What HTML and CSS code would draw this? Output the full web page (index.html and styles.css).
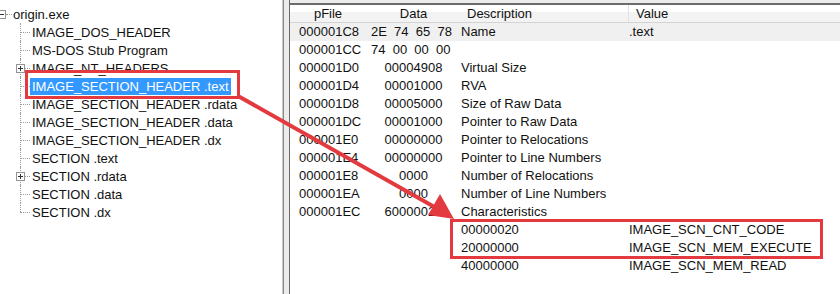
FILE: index.html
```html
<!DOCTYPE html>
<html lang="en">
<head>
    <meta charset="UTF-8">
    <title>PE Section Header</title>
    <link rel="stylesheet" href="styles.css">
</head>
<body>
    <div class="window">
        <div class="tree-pane">
            <div class="root">
                <span class="box minus"></span>
                <span class="label">origin.exe</span>
            </div>
            <ul class="children">
                <li><span class="label">IMAGE_DOS_HEADER</span></li>
                <li><span class="label">MS-DOS Stub Program</span></li>
                <li class="has-kids"><span class="box plus"></span><span class="label">IMAGE_NT_HEADERS</span></li>
                <li><span class="label selected">IMAGE_SECTION_HEADER .text</span></li>
                <li><span class="label">IMAGE_SECTION_HEADER .rdata</span></li>
                <li><span class="label">IMAGE_SECTION_HEADER .data</span></li>
                <li><span class="label">IMAGE_SECTION_HEADER .dx</span></li>
                <li><span class="label">SECTION .text</span></li>
                <li class="has-kids"><span class="box plus"></span><span class="label">SECTION .rdata</span></li>
                <li><span class="label">SECTION .data</span></li>
                <li><span class="label">SECTION .dx</span></li>
            </ul>
        </div>
        <div class="splitter"></div>
        <div class="list-pane">
            <div class="list">
                <div class="row head">
                    <div class="c1">pFile</div>
                    <div class="c2">Data</div>
                    <div class="c3">Description</div>
                    <div class="c4">Value</div>
                </div>
                <div class="row shaded">
                    <div class="c1">000001C8</div>
                    <div class="c2 bytes">2E&nbsp; 74&nbsp; 65&nbsp; 78</div>
                    <div class="c3">Name</div>
                    <div class="c4">.text</div>
                </div>
                <div class="row">
                    <div class="c1">000001CC</div>
                    <div class="c2 bytes">74&nbsp; 00&nbsp; 00&nbsp; 00</div>
                    <div class="c3"></div>
                    <div class="c4"></div>
                </div>
                <div class="row">
                    <div class="c1">000001D0</div>
                    <div class="c2">00004908</div>
                    <div class="c3">Virtual Size</div>
                    <div class="c4"></div>
                </div>
                <div class="row">
                    <div class="c1">000001D4</div>
                    <div class="c2">00001000</div>
                    <div class="c3">RVA</div>
                    <div class="c4"></div>
                </div>
                <div class="row">
                    <div class="c1">000001D8</div>
                    <div class="c2">00005000</div>
                    <div class="c3">Size of Raw Data</div>
                    <div class="c4"></div>
                </div>
                <div class="row">
                    <div class="c1">000001DC</div>
                    <div class="c2">00001000</div>
                    <div class="c3">Pointer to Raw Data</div>
                    <div class="c4"></div>
                </div>
                <div class="row">
                    <div class="c1">000001E0</div>
                    <div class="c2">00000000</div>
                    <div class="c3">Pointer to Relocations</div>
                    <div class="c4"></div>
                </div>
                <div class="row">
                    <div class="c1">000001E4</div>
                    <div class="c2">00000000</div>
                    <div class="c3">Pointer to Line Numbers</div>
                    <div class="c4"></div>
                </div>
                <div class="row">
                    <div class="c1">000001E8</div>
                    <div class="c2">0000</div>
                    <div class="c3">Number of Relocations</div>
                    <div class="c4"></div>
                </div>
                <div class="row">
                    <div class="c1">000001EA</div>
                    <div class="c2">0000</div>
                    <div class="c3">Number of Line Numbers</div>
                    <div class="c4"></div>
                </div>
                <div class="row">
                    <div class="c1">000001EC</div>
                    <div class="c2">60000020</div>
                    <div class="c3">Characteristics</div>
                    <div class="c4"></div>
                </div>
                <div class="row">
                    <div class="c1"></div>
                    <div class="c2"></div>
                    <div class="c3">00000020</div>
                    <div class="c4">IMAGE_SCN_CNT_CODE</div>
                </div>
                <div class="row">
                    <div class="c1"></div>
                    <div class="c2"></div>
                    <div class="c3">20000000</div>
                    <div class="c4">IMAGE_SCN_MEM_EXECUTE</div>
                </div>
                <div class="row">
                    <div class="c1"></div>
                    <div class="c2"></div>
                    <div class="c3">40000000</div>
                    <div class="c4">IMAGE_SCN_MEM_READ</div>
                </div>
            </div>
        </div>

        <!-- red annotations drawn over the screenshot -->
        <div class="mark mark-tree"></div>
        <div class="mark mark-flags"></div>
        <svg class="arrow" width="840" height="294" viewBox="0 0 840 294">
            <line x1="238" y1="96" x2="438" y2="209" stroke="#e23a3f" stroke-width="4"/>
            <polygon points="454,219 428,215 440,194" fill="#e23a3f"/>
        </svg>
    </div>
</body>
</html>
```

FILE: styles.css
```css
body {
    margin: 0;
    background: #fff;
    font-family: "Liberation Sans", Arial, sans-serif;
    font-size: 13px;
    color: #111;
}
.window {
    position: relative;
    display: flex;
    width: 840px;
    height: 294px;
    overflow: hidden;
}

/* tree */
.tree-pane {
    width: 282px;
    padding-top: 6px;
    background: #fff;
    border-right: 1px solid #c8c8c8;
}
.root {
    position: relative;
    height: 18px;
    line-height: 18px;
    padding-left: 13px;
}
.root .box {
    left: -3px;
    top: 4px;
}
.root::after {
    content: "";
    position: absolute;
    left: 6px;
    top: 8px;
    width: 6px;
    border-top: 1px dotted #9a9a9a;
}
.children {
    list-style: none;
    margin: 0 0 0 20px;
    padding: 0;
}
.children li {
    position: relative;
    height: 18px;
    line-height: 18px;
    padding-left: 12px;
    white-space: nowrap;
}
.children li::before {
    content: "";
    position: absolute;
    left: 0;
    top: 8px;
    width: 10px;
    border-top: 1px dotted #9a9a9a;
}
.children li::after {
    content: "";
    position: absolute;
    left: 0;
    top: -1px;
    height: 18px;
    border-left: 1px dotted #9a9a9a;
}
.children li:last-child::after {
    height: 9px;
}
.box {
    position: absolute;
    z-index: 1;
    width: 7px;
    height: 7px;
    border: 1px solid #949494;
    background: #fff;
}
.children .box {
    left: -4px;
    top: 4px;
}
.box::before {
    content: "";
    position: absolute;
    left: 1px;
    top: 3px;
    width: 5px;
    border-top: 1px solid #333;
}
.box.plus::after {
    content: "";
    position: absolute;
    left: 3px;
    top: 1px;
    height: 5px;
    border-left: 1px solid #333;
}
.label {
    display: inline-block;
}
.label.selected {
    margin-left: -2px;
    padding: 0 2px;
    line-height: 17px;
    background: #3399ff;
    color: #fff;
}

.splitter {
    width: 7px;
    background: #ececec;
    border-left: 1px solid #8a8a8a;
    border-right: 1px solid #6a6a6a;
    box-sizing: border-box;
}

/* list view */
.list-pane {
    flex: 1;
    padding-top: 3px;
    background: #ececec;
}
.list {
    height: 100%;
    background: #fff;
    border-top: 2px solid #6b6b6b;
}
.row {
    display: grid;
    grid-template-columns: 76px 95px 168px 1fr;
    height: 18px;
    line-height: 18px;
    white-space: nowrap;
}
.row > div {
    overflow: hidden;
}
.row .c1 {
    padding-left: 9px;
}
.row .c2 {
    text-align: center;
}
.row .c2.bytes {
    text-align: left;
    padding-left: 5px;
}
.row.head {
    height: 17px;
    line-height: 18px;
    background: linear-gradient(#fff 0, #fff 40%, #f3f3f3 40%);
    border-bottom: 1px solid #d4d4d4;
}
.row.head .c1 {
    padding-left: 0;
    text-align: center;
}
.row.head .c3 {
    padding-left: 6px;
    border-right: 1px solid #e2e2e2;
}
.row.head .c4 {
    padding-left: 7px;
}
.row.shaded {
    background: #f0f0f0;
}

/* annotations */
.mark {
    position: absolute;
    border: 3px solid #e23a3f;
    box-sizing: border-box;
}
.mark-tree {
    left: 25px;
    top: 70px;
    width: 215px;
    height: 29px;
}
.mark-flags {
    left: 450px;
    top: 219px;
    width: 373px;
    height: 40px;
}
.arrow {
    position: absolute;
    left: 0;
    top: 0;
    pointer-events: none;
}
```
